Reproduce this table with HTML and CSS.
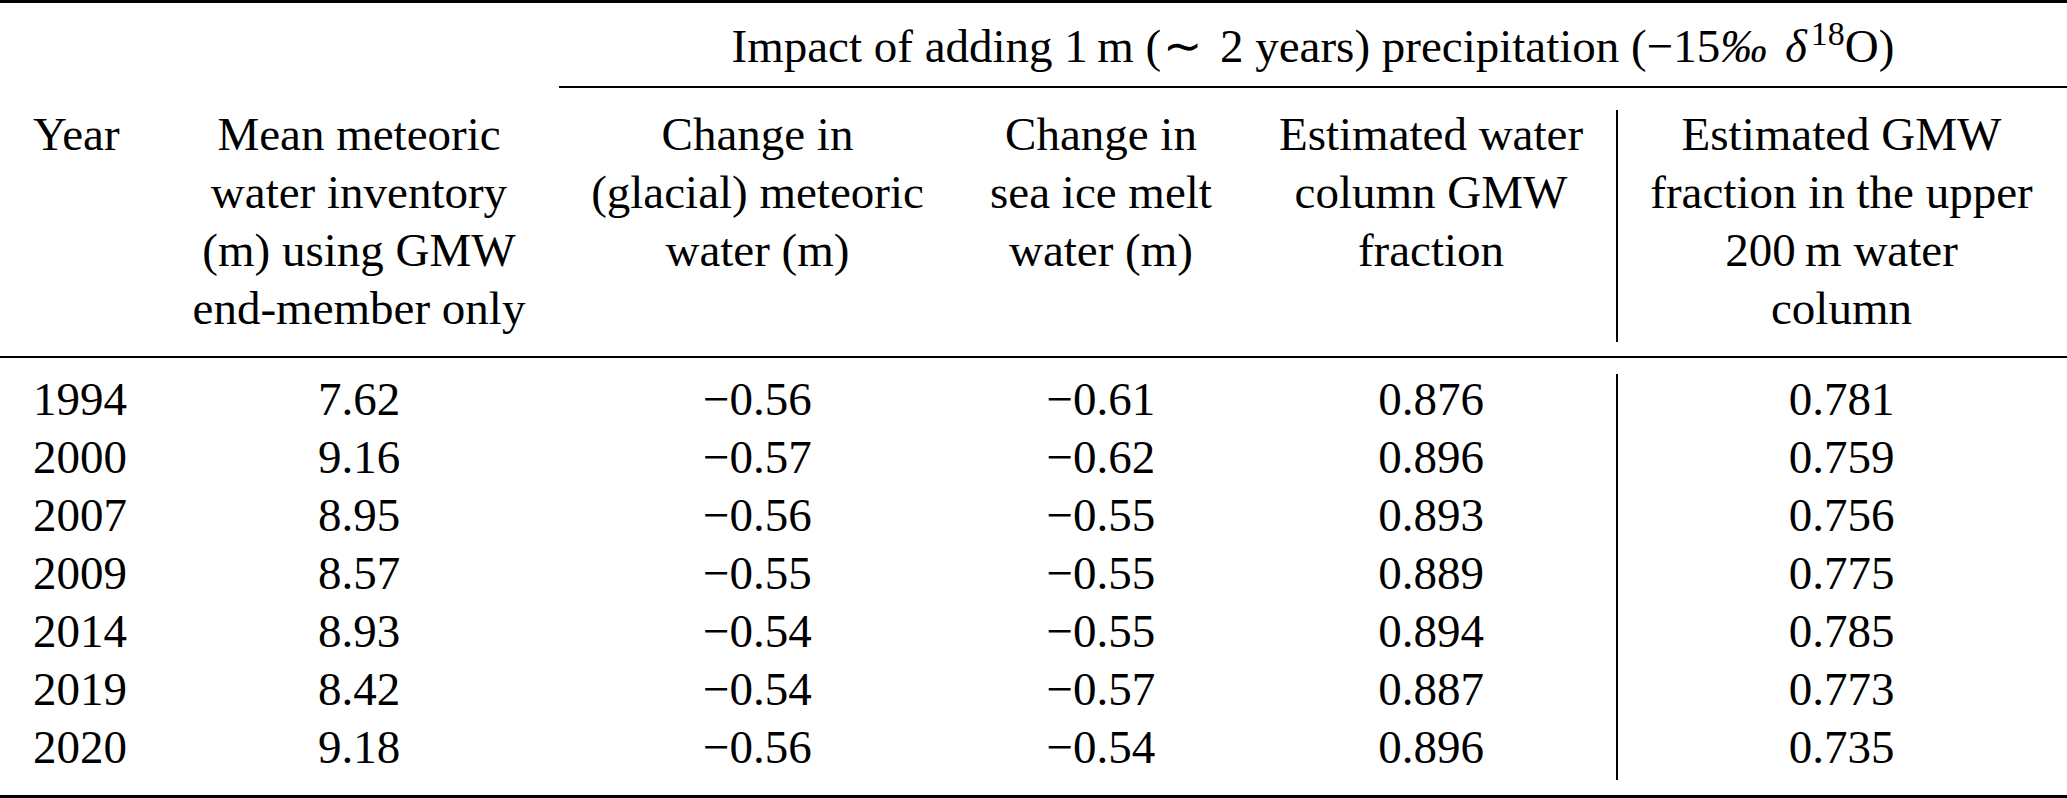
FILE: index.html
```html
<!DOCTYPE html>
<html lang="en">
<head>
<meta charset="utf-8">
<title>Table</title>
<link rel="stylesheet" href="styles.css">
</head>
<body>
<div class="tbl">
  <div class="row span-row">
    <div class="span-cell">Impact of adding 1&#8201;m (<span class="rel">&#8764;</span> 2 years) precipitation (&#8722;15<i class="permil">&#8240;</i> <i>&#948;</i><sup>18</sup>O)</div>
  </div>
  <div class="row head-row">
    <div class="c c1">Year</div>
    <div class="c">Mean meteoric<br>water inventory<br>(m) using GMW<br>end-member only</div>
    <div class="c">Change in<br>(glacial) meteoric<br>water (m)</div>
    <div class="c">Change in<br>sea ice melt<br>water (m)</div>
    <div class="c">Estimated water<br>column GMW<br>fraction</div>
    <div class="c sep">Estimated GMW<br>fraction in the upper<br>200&#8201;m water<br>column</div>
  </div>
  <div class="row body-row">
    <div class="c c1">1994</div><div class="c">7.62</div><div class="c">&#8722;0.56</div><div class="c">&#8722;0.61</div><div class="c">0.876</div><div class="c sep">0.781</div>
    <div class="c c1">2000</div><div class="c">9.16</div><div class="c">&#8722;0.57</div><div class="c">&#8722;0.62</div><div class="c">0.896</div><div class="c sep">0.759</div>
    <div class="c c1">2007</div><div class="c">8.95</div><div class="c">&#8722;0.56</div><div class="c">&#8722;0.55</div><div class="c">0.893</div><div class="c sep">0.756</div>
    <div class="c c1">2009</div><div class="c">8.57</div><div class="c">&#8722;0.55</div><div class="c">&#8722;0.55</div><div class="c">0.889</div><div class="c sep">0.775</div>
    <div class="c c1">2014</div><div class="c">8.93</div><div class="c">&#8722;0.54</div><div class="c">&#8722;0.55</div><div class="c">0.894</div><div class="c sep">0.785</div>
    <div class="c c1">2019</div><div class="c">8.42</div><div class="c">&#8722;0.54</div><div class="c">&#8722;0.57</div><div class="c">0.887</div><div class="c sep">0.773</div>
    <div class="c c1">2020</div><div class="c">9.18</div><div class="c">&#8722;0.56</div><div class="c">&#8722;0.54</div><div class="c">0.896</div><div class="c sep">0.735</div>
  </div>
</div>
</body>
</html>
```

FILE: styles.css
```css
html, body {
  margin: 0;
  padding: 0;
  background: #fff;
}

.tbl {
  width: 2067px;
  border-top: 3px solid #000;
  border-bottom: 3px solid #000;
  font-family: "Liberation Serif", "Times New Roman", serif;
  font-size: 47px;
  line-height: 58px;
  color: #000;
}

.row {
  display: grid;
  grid-template-columns: 159px 400px 397px 290px 370px 451px;
}

.span-cell {
  grid-column: 3 / 7;
  text-align: center;
  white-space: nowrap;
  padding: 14px 0 11px;
  border-bottom: 2px solid #000;
}

.span-cell .rel {
  margin: 0 6px 0 2px;
}

.span-cell .permil {
  margin-right: 6px;
}

.span-cell sup {
  font-size: 34px;
  line-height: 0;
  vertical-align: 17px;
  margin-left: 4px;
}

.head-row {
  padding: 17px 0 14px;
  border-bottom: 2px solid #000;
}

.c {
  text-align: center;
  white-space: nowrap;
}

.c1 {
  text-align: left;
  padding-left: 33px;
}

.head-row .c {
  padding-bottom: 5px;
}

.head-row .sep {
  background: linear-gradient(#000, #000) no-repeat 0 5px / 2px 100%;
}

.body-row {
  padding: 16px 0 15px;
  grid-auto-rows: 58px;
  line-height: 50px;
}

.body-row .sep {
  background: linear-gradient(#000, #000) no-repeat 0 0 / 2px 100%;
}
```
